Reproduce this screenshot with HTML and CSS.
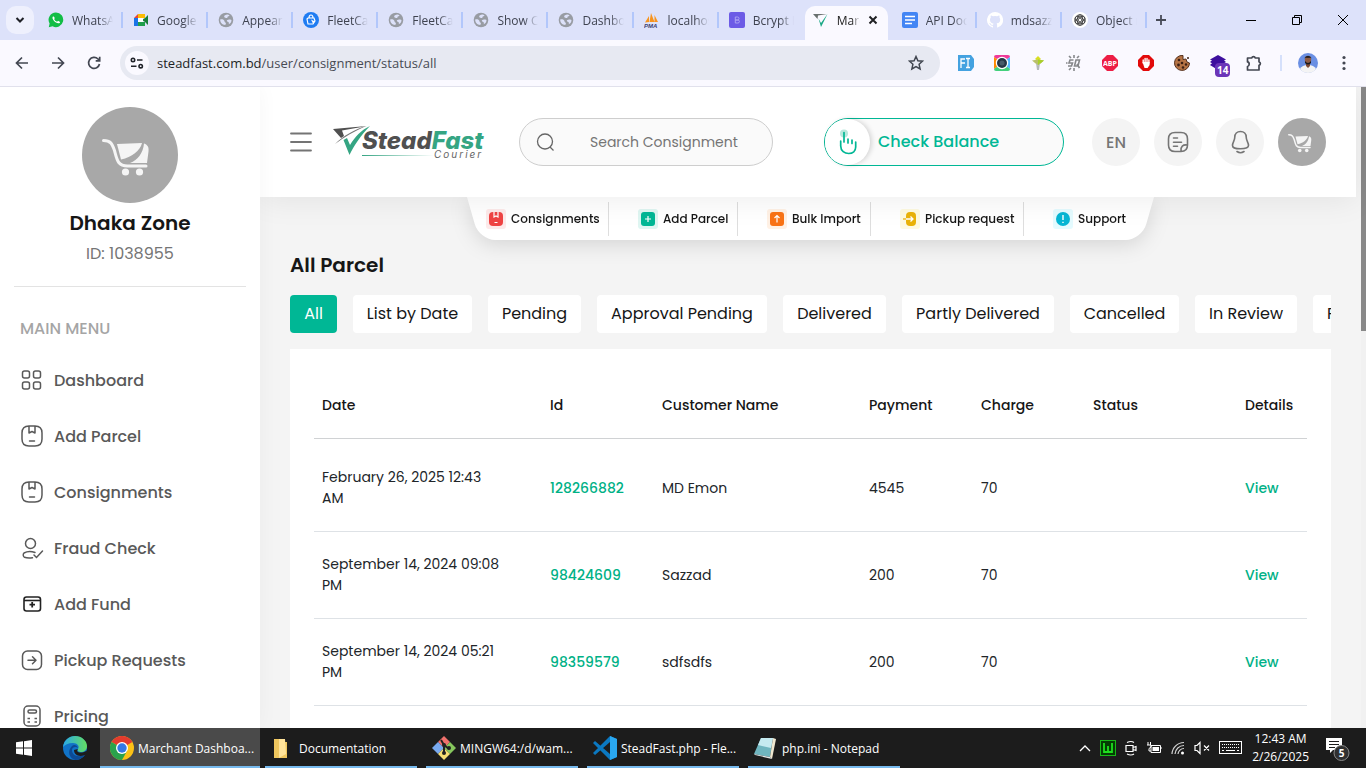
FILE: index.html
```html
<!DOCTYPE html>
<html lang="en">
<head>
<meta charset="utf-8">
<meta name="viewport" content="width=device-width, initial-scale=1">
<title>Marchant Dashboard</title>
<link rel="stylesheet" href="styles.css">
</head>
<body>
<svg class="sprite" aria-hidden="true">
  <symbol id="globe" viewBox="0 0 16 16"><circle cx="8" cy="8" r="7.300" fill="#989ca3"/><path d="M2.200 7.500c2-.6 3.200 0 4 1.100.6 1 .2 1.600 1.200 2 .9.500.5 1.600-.2 2.400-3-.2-5.200-2.600-5-5.500zM7 3.200c1.500-1 3.300-.9 4.500 0-.2 1-1 1-1.700 1.300-.5.600 0 1.300-1 1.500s-1.600-.8-2.500-.8c-.3-1 .1-1.600.7-2zM9 8.200c1.200-1 3-.7 4.500-.3 0 2-1.200 3.600-2.700 4.300.3-1.500-.1-2-1-2.400C9 9.400 8.600 8.800 9 8.200z" fill="#dde2fa"/></symbol>
  <symbol id="cart" viewBox="0 0 96 96"><circle cx="48" cy="48" r="48" fill="#a8a8a8"/><path d="M21.500 33.500c7 0 8.500 3 11 10 2.500 9 3 15.500 13 15.500H64" fill="none" stroke="#f5f5f5" stroke-width="3" stroke-linecap="round"/><path d="M35 37l25-1c-2 8-10 14-21 16.500z" fill="#f5f5f5"/><path d="M62 36.500c4 1.500 5 4 4.500 8L65 56H48c8-3 13-10 14-19.500z" fill="#f5f5f5"/><circle cx="43.500" cy="65" r="3.600" fill="#f5f5f5"/><circle cx="57.500" cy="65" r="3.600" fill="#f5f5f5"/></symbol>
  <symbol id="parcel" viewBox="0 0 24 24"><path d="M2 9q0-7 7-7h6q7 0 7 7v6q0 7-7 7H9q-7 0-7-7zM9 2.500V9l3-1.500L15 9V2.500M9.500 17h5" fill="none" stroke="currentColor" stroke-width="1.500" stroke-linecap="round" stroke-linejoin="round"/></symbol>
</svg>

<div class="window">
  <header class="tabstrip">
    <button class="tab-search" aria-label="Search tabs"><svg width="10" height="8" viewBox="0 0 10 8"><path d="M1.500 2L5 5.500 8.500 2" fill="none" stroke="#1f2127" stroke-width="2"/></svg></button>
    <div class="tabs">
      <button class="tab"><svg class="fav" viewBox="0 0 16 16"><path d="M8 .5A7.300 7.300 0 001.600 11.500L.8 15.300l3.800-1A7.300 7.300 0 108 .5z" fill="#12bd45"/><path d="M5.300 4.200c-.9.500-1.100 1.800-.4 3 1.100 2 3 3.700 5.200 4.100 1 .2 2-.5 2-1.400L10 8.800l-.9 1C7.700 9.300 6.600 8.200 6.100 7l.8-.9z" fill="#fff"/></svg><span>WhatsApp</span></button>
      <button class="tab"><svg class="fav" viewBox="0 0 16 16"><path d="M1 6l4-4v4z" fill="#ea4335"/><path d="M5 2h7v4H5z" fill="#fbbc04"/><path d="M1 6h4v8H1z" fill="#1a73e8"/><path d="M5 10h7v4H5z" fill="#1e9f4b"/><path d="M9 8l3-2 3-3v10l-3-3z" fill="#188038"/><path d="M5 6h5v4H5z" fill="#fff"/></svg><span>Google Meet</span></button>
      <button class="tab"><svg class="fav"><use href="#globe"/></svg><span>Appearance</span></button>
      <button class="tab"><svg class="fav" viewBox="0 0 16 16"><circle cx="8" cy="8" r="8" fill="#1f7cf2"/><path d="M5 6h6l1 3-2 3H5L4 7zM6 6q0-3 2-3t2 3" fill="none" stroke="#fff" stroke-width="1.200"/><path d="M8 7.500l4 2-2 2z" fill="#fff"/></svg><span>FleetCart</span></button>
      <button class="tab"><svg class="fav"><use href="#globe"/></svg><span>FleetCart</span></button>
      <button class="tab"><svg class="fav"><use href="#globe"/></svg><span>Show Cart</span></button>
      <button class="tab"><svg class="fav"><use href="#globe"/></svg><span>Dashboard</span></button>
      <button class="tab"><svg class="fav" viewBox="0 0 16 16"><path d="M1 10.500L5 4v6zM5.500 10L7 1l3.500 9zM10.500 10V3L14 10z" fill="#f7941e"/><text x="0" y="15.500" class="pma">PMA</text></svg><span>localhost</span></button>
      <button class="tab last-before"><svg class="fav" viewBox="0 0 16 16"><rect width="16" height="16" rx="2" fill="#6c5be6"/><path d="M6.300 5h2.200a1.400 1.400 0 010 3H6.300zM6.300 8h2.600a1.500 1.500 0 010 3H6.300z" fill="none" stroke="#b1a8f3" stroke-width=".9"/></svg><span>Bcrypt Hash</span></button>
      <button class="tab tab-active"><svg class="fav" viewBox="0 0 16 16"><path d="M0 2h14L5 3.500 4.500 7z" fill="#69706f"/><path d="M5.500 6.500L8 11l6.500-9L8 15z" fill="#1aa885"/></svg><span>Marchant</span><svg class="tab-close" width="10" height="10" viewBox="0 0 10 10"><path d="M1.500 1.500l7 7M8.500 1.500l-7 7" stroke="#202124" stroke-width="2"/></svg></button>
      <button class="tab"><svg class="fav" viewBox="0 0 16 16"><rect width="16" height="16" rx="2" fill="#4285f4"/><path d="M3 4.500h10M3 8h10M3 11.500h7" stroke="#fff" stroke-width="1.600"/></svg><span>API Docs</span></button>
      <button class="tab"><svg class="fav" viewBox="0 0 16 16"><path fill="#fff" d="M8 0a8 8 0 00-2.500 15.600c.4.100.5-.2.500-.4v-1.500c-2 .5-2.600-.9-2.600-.9-.4-.9-.9-1.200-.9-1.200-.7-.5.100-.5.100-.5.800.1 1.200.9 1.200.9.700 1.200 1.900.9 2.300.7.100-.5.300-.9.500-1.100-1.800-.2-3.600-.9-3.600-4 0-.9.300-1.600.8-2.100-.1-.2-.4-1 .1-2.100 0 0 .7-.2 2.200.8a7.600 7.600 0 014 0c1.500-1 2.200-.8 2.200-.8.400 1.100.2 1.900.1 2.100.5.600.8 1.300.8 2.100 0 3.100-1.900 3.700-3.600 3.900.3.300.5.800.5 1.500v2.200c0 .2.100.5.500.4A8 8 0 008 0z"/></svg><span>mdsazzad</span></button>
      <button class="tab"><svg class="fav" viewBox="0 0 16 16"><circle cx="8" cy="8" r="8" fill="#fff"/><g fill="none" stroke="#333" stroke-width=".8"><circle cx="8" cy="8" r="5.300"/><circle cx="8" cy="8" r="1.800"/><ellipse cx="8" cy="8" rx="2.800" ry="5.200"/><ellipse cx="8" cy="8" rx="2.800" ry="5.200" transform="rotate(60 8 8)"/><ellipse cx="8" cy="8" rx="2.800" ry="5.200" transform="rotate(120 8 8)"/></g></svg><span>Object m</span></button>
    </div>
    <button class="new-tab" aria-label="New tab"><svg width="12" height="12" viewBox="0 0 12 12"><path d="M6 1v10M1 6h10" stroke="#474b57" stroke-width="1.800"/></svg></button>
    <div class="win-buttons">
      <button aria-label="Minimize"><svg width="10" height="10" viewBox="0 0 10 10"><path d="M0 5.500h10" stroke="#000"/></svg></button>
      <button aria-label="Restore"><svg width="10" height="10" viewBox="0 0 10 10"><path d="M.5 2.500h7v7h-7zM2.500 2V.5h7v7H8" fill="none" stroke="#000"/></svg></button>
      <button aria-label="Close"><svg width="10" height="10" viewBox="0 0 10 10"><path d="M0 0l10 10M10 0L0 10" stroke="#000"/></svg></button>
    </div>
  </header>

  <div class="toolbar">
    <div class="nav-buttons">
      <button aria-label="Back"><svg width="14" height="14" viewBox="0 0 14 14"><path d="M13 7H2M7 1.500L1.500 7 7 12.500"/></svg></button>
      <button aria-label="Forward"><svg width="14" height="14" viewBox="0 0 14 14"><path d="M1 7h11M7 1.500L12.500 7 7 12.500"/></svg></button>
      <button aria-label="Reload"><svg width="14" height="14" viewBox="0 0 14 14"><path d="M12.500 8A5.500 5.500 0 1111 3l1.500 1.500M12.700.8v4h-4"/></svg></button>
    </div>
    <div class="omnibox">
      <button class="site-info" aria-label="Site information"><svg width="14" height="12" viewBox="0 0 14 12"><g fill="none" stroke="#202329" stroke-width="1.600"><circle cx="3" cy="3" r="1.700"/><path d="M7 3h5.500M1 9.200h5.500"/><circle cx="10.700" cy="9.200" r="1.700"/></g></svg></button>
      <div class="url" role="textbox" aria-label="Address" contenteditable="true" spellcheck="false">steadfast.com.bd<span>/user/consignment/status/all</span></div>
      <button class="star" aria-label="Bookmark"><svg width="16" height="16" viewBox="0 0 16 16"><path d="M8 1.500l1.900 4.200 4.600.5-3.400 3.100 1 4.600L8 11.500l-4.100 2.400 1-4.600L1.500 6.200l4.600-.5z" fill="none" stroke="#414650" stroke-width="1.500"/></svg></button>
    </div>
    <div class="extensions">
      <button aria-label="Font tool"><svg width="16" height="16" viewBox="0 0 16 16"><path d="M0 0h13l3 4v8l-3 4H0z" fill="#44a2e0"/><path d="M3 13V4h4M3 8h4M8 3.500h4M10 3.500v9M8 12.500h4" fill="none" stroke="#fff" stroke-width="1.300"/></svg></button>
      <button aria-label="Color picker"><svg width="16" height="16" viewBox="0 0 16 16"><path d="M2 0h12q2 0 2 2L8 8 0 2q0-2 2-2z" fill="#ef3b9a"/><path d="M0 2l8 6-8 6z" fill="#ff8a00"/><path d="M16 2L8 8l8 6z" fill="#50b8ff"/><path d="M0 14l8-6 8 6q0 2-2 2H2q-2 0-2-2z" fill="#43d07c"/><circle cx="8" cy="8" r="6.200" fill="#fff"/><circle cx="8" cy="8" r="5" fill="#263746"/><circle cx="8" cy="8" r="2.500" fill="#485b6a"/></svg></button>
      <button aria-label="Pointer"><svg width="12" height="16" viewBox="0 0 12 16"><path d="M6 1l3 3-3 2-3-2z" fill="#d9e021"/><path d="M0 5.500l6-1 6 1-6 5z" fill="#b9c06a"/><path d="M6 4.500l6 1-6 5z" fill="#a9cf2a"/><path d="M4 8l2 2.500L8 8l-1 7H5z" fill="#b4b9bb"/></svg></button>
      <button aria-label="Query tool"><svg width="16" height="16" viewBox="0 0 16 16"><path d="M7.500 5H4L3 8h3.500l-1 3H2M13.500 5H10l-1.500 6H12zM11 9l2.500 4M3 1l2 2M8 0v3M13 1l-2 2M3 15l2-2M8 16v-3M0 8h1.500" fill="none" stroke="#85878a" stroke-width="1.600"/></svg></button>
      <button aria-label="Adblock Plus"><svg width="16" height="16" viewBox="0 0 16 16"><path d="M5 0h6l5 5v6l-5 5H5l-5-5V5z" fill="#ed1e45"/><text x="8" y="11" text-anchor="middle" class="abp">ABP</text></svg></button>
      <button aria-label="AdBlock"><svg width="16" height="16" viewBox="0 0 16 16"><path d="M5 0h6l5 5v6l-5 5H5l-5-5V5z" fill="#e20a0a"/><path d="M5.200 8V5M7.100 7V3.500M9 7V3.500M10.900 8V5" stroke="#fff" stroke-width="1.400" stroke-linecap="round"/><path d="M4.500 7h7.100v3l-2 3H6.500z" fill="#fff"/></svg></button>
      <button aria-label="Cookies"><svg width="16" height="16" viewBox="0 0 16 16"><path d="M9 .5A7.500 7.500 0 1015.500 8L13 7l-1-3-3 .5z" fill="#b47345" stroke="#54301d"/><g fill="#3c2015"><circle cx="5" cy="5" r="1.300"/><circle cx="8" cy="8" r="1.300"/><circle cx="4.500" cy="10" r="1.400"/><circle cx="9" cy="12.500" r="1.300"/><circle cx="12" cy="9.500" r="1.200"/><circle cx="14" cy="3" r="1"/></g></svg></button>
      <button class="ext-badged" aria-label="Stack"><svg width="16" height="16" viewBox="0 0 16 16"><path d="M8 0l8 4.500-2 1 2 1.500-2 1.200L16 10l-8 5-8-5 2-1.800L0 7l2-1.500-2-1z" fill="#3d0f9e"/></svg><span class="ext-badge">14</span></button>
      <button aria-label="Extensions"><svg width="17" height="16" viewBox="0 0 17 16"><path d="M1.500 3h4.200a1.900 1.900 0 013.600 0H13v3.800a1.800 1.800 0 010 3.500V15H1.500v-3.500c2-.2 2.500-4.300 0-4.600z" fill="none" stroke="#434752" stroke-width="1.700" stroke-linejoin="round"/></svg></button>
      <i class="tool-sep"></i>
      <button aria-label="Profile"><svg width="20" height="20" viewBox="0 0 20 20"><circle cx="10" cy="10" r="10" fill="#6a8fe3"/><path d="M2 16q2-4 8-4t8 4a10 10 0 01-16 0z" fill="#f4f4f4"/><path d="M8 9h4v4l-2 2-2-2z" fill="#7d4b36"/><ellipse cx="10" cy="7" rx="3.200" ry="4.200" fill="#8e5b45"/><path d="M6.500 6c-.3-4 7.300-4 7 0L13 4.800H7zM7 8q3 4 6 0v2q-3 3-6 0z" fill="#17191f"/></svg></button>
      <button aria-label="Menu"><svg width="4" height="16" viewBox="0 0 4 16"><g fill="#434752"><circle cx="2" cy="2.500" r="1.600"/><circle cx="2" cy="8" r="1.600"/><circle cx="2" cy="13.500" r="1.600"/></g></svg></button>
    </div>
  </div>

  <div class="page">
    <aside class="sidebar">
      <div class="profile">
        <svg class="avatar" viewBox="0 0 96 96"><use href="#cart"/></svg>
        <h2>Dhaka Zone</h2>
        <p>ID: 1038955</p>
      </div>
      <h3 class="menu-title">MAIN MENU</h3>
      <nav class="menu">
        <a href="#"><svg viewBox="0 0 24 24"><g fill="none" stroke="currentColor" stroke-width="1.500"><rect x="2.500" y="3" width="7" height="7" rx="2"/><rect x="13.500" y="3" width="7" height="7" rx="2"/><rect x="2.500" y="14" width="7" height="7" rx="2"/><rect x="13.500" y="14" width="7" height="7" rx="2"/></g></svg>Dashboard</a>
        <a href="#"><svg><use href="#parcel"/></svg>Add Parcel</a>
        <a href="#"><svg><use href="#parcel"/></svg>Consignments</a>
        <a href="#"><svg viewBox="0 0 24 24"><g fill="none" stroke="currentColor" stroke-width="1.500" stroke-linecap="round"><circle cx="10.500" cy="7.500" r="5"/><path d="M15 16.500c-3-1.200-8-1.300-11 .5-1.200 1-1 3.500.5 4.300 2 .8 6 .8 8 .5M14 19l2.500 2.500 6-6.500"/></g></svg>Fraud Check</a>
        <a href="#"><svg viewBox="0 0 24 24"><g fill="none" stroke="#222" stroke-width="1.600" stroke-linejoin="round"><rect x="4" y="5" width="16.500" height="14" rx="2.500"/><path d="M4 8.500h16.500"/><path d="M12.200 10v5.500M9.500 12.700H15" stroke-width="1.800"/></g></svg>Add Fund</a>
        <a href="#"><svg viewBox="0 0 24 24"><g fill="none" stroke="currentColor" stroke-width="1.500" stroke-linecap="round" stroke-linejoin="round"><rect x="2.500" y="3" width="19" height="18.500" rx="5"/><path d="M8 12.300h8M12.500 8.800L16 12.300l-3.500 3.500"/></g></svg>Pickup Requests</a>
        <a href="#"><svg viewBox="0 0 24 24"><g fill="none" stroke="currentColor" stroke-width="1.500"><rect x="4" y="2" width="16" height="20" rx="4"/><rect x="8" y="6" width="8.500" height="3" rx="1.500"/><path d="M7.500 14.500H10M14.500 14.500H17M7.500 18H10M14.500 18H17"/></g></svg>Pricing</a>
      </nav>
    </aside>

    <main class="content">
      <div class="topbar">
        <button class="burger" aria-label="Toggle menu"><svg width="22" height="20" viewBox="0 0 22 20"><path d="M1 1.500h20M1 10h20M1 18.500h20" stroke="#747474" stroke-width="1.800" stroke-linecap="round"/></svg></button>
        <a class="logo" href="#" aria-label="SteadFast Courier"><svg width="156" height="36" viewBox="0 0 156 36"><defs><linearGradient id="rule"><stop offset="0" stop-color="#35a583"/><stop offset="1" stop-color="#35a583" stop-opacity="0"/></linearGradient></defs><path d="M0 5L34 2 9 6.500 11 12l-3 2z" fill="#505050"/><path d="M2 20C10 12 22 5 33 2 22 7 11 13 2 20z" fill="#777"/><path d="M10.500 16l3.500-2 3 7C22 13 28 6 37 2 27 12 21 22 16.500 31z" fill="#35a583"/><path d="M29 31h72v1H29z" fill="url(#rule)"/><text x="29" y="25" class="logo-name"><tspan fill="#505050">Stead</tspan><tspan fill="#35a583">Fast</tspan></text><text x="101" y="34" class="logo-sub">Courier</text></svg></a>
        <label class="search"><svg width="20" height="20" viewBox="0 0 20 20"><circle cx="9" cy="9.500" r="7.500" fill="none" stroke="#666" stroke-width="1.300"/><path d="M14 15l3.500 3.500" stroke="#666" stroke-width="1.300"/></svg><input type="search" placeholder="Search Consignment" aria-label="Search Consignment"></label>
        <button class="balance"><span class="knob"><svg width="18" height="26" viewBox="0 0 18 26"><circle cx="5" cy="4.500" r="4" fill="#b9e8dd"/><path d="M5 3.500V13M9 10v4M13 11v3.500M16.700 13v5c0 4-3 6.500-7 6.500s-8-2.500-8-7.500V12" fill="none" stroke="#00b795" stroke-width="1.700" stroke-linecap="round"/></svg></span>Check Balance</button>
        <div class="actions">
          <button>EN</button>
          <button aria-label="Notes"><svg width="22" height="22" viewBox="0 0 22 22"><path d="M14 20.500H8q-6.500 0-6.500-6.500V8q0-6.500 6.500-6.500h6q6.500 0 6.500 6.500v6q0 6.500-6.500 6.500zM20 14c-4-.5-6.500 1.500-6 6M6.500 7h4M6.500 11.300h8M6.500 15.300h4" fill="none" stroke="#757575" stroke-width="1.600" stroke-linecap="round"/></svg></button>
          <button aria-label="Notifications"><svg width="20" height="24" viewBox="0 0 20 24"><path d="M10.500 1.500c3.500 0 5.700 2.500 5.700 5.500 0 4 2.300 5 2.300 8.500 0 2.200-1.700 3.200-8 3.200s-8-1-8-3.200c0-3.500 2.300-4.500 2.300-8.500 0-3 2.200-5.500 5.700-5.500zM7 21.500q3.500 2.500 7 0" fill="none" stroke="#757575" stroke-width="1.600" stroke-linecap="round"/></svg></button>
          <button aria-label="Account"><svg width="48" height="48" viewBox="0 0 96 96"><use href="#cart"/></svg></button>
        </div>
      </div>

      <nav class="quick">
        <a href="#"><svg viewBox="0 0 20 20"><rect width="20" height="20" rx="3" fill="#fdeaea"/><rect x="3" y="3" width="14" height="14" rx="4" fill="#ef4444"/><path d="M8 3v5l2-1 2 1V3M8.500 13.500h3" fill="none" stroke="#fff" stroke-width="1.200"/></svg>Consignments</a>
        <a href="#"><svg viewBox="0 0 20 20"><rect width="20" height="20" rx="3" fill="#dff6f2"/><rect x="3" y="3" width="14" height="14" rx="3" fill="#00b795"/><path d="M10 7v6M7 10h6" stroke="#fff" stroke-width="1.200"/></svg>Add Parcel</a>
        <a href="#"><svg viewBox="0 0 20 20"><rect width="20" height="20" rx="3" fill="#fff1e5"/><rect x="3" y="3" width="14" height="14" rx="3" fill="#f97316"/><path d="M10 13.500V7M7.500 9L10 6.500 12.500 9" fill="none" stroke="#fff" stroke-width="1.200"/></svg>Bulk Import</a>
        <a href="#"><svg viewBox="0 0 20 20"><rect width="20" height="20" rx="3" fill="#fefae0"/><path d="M6 7q0-4 4-4h2q4 0 4 4v6q0 4-4 4h-2q-4 0-4-4z" fill="#eab308"/><path d="M6 10h6.500M10.500 7.500L13 10l-2.500 2.500" fill="none" stroke="#fff" stroke-width="1.300"/><path d="M3 10h3" stroke="#eab308" stroke-width="1.300"/></svg>Pickup request</a>
        <a href="#"><svg viewBox="0 0 20 20"><rect width="20" height="20" rx="3" fill="#e4fbff"/><circle cx="10" cy="10" r="7" fill="#06b6d4"/><path d="M10 6v5M10 12.700v1.300" stroke="#fff" stroke-width="1.400"/></svg>Support</a>
      </nav>

      <section class="parcels">
        <h1>All Parcel</h1>
        <div class="filters">
          <button class="selected">All</button><button>List by Date</button><button>Pending</button><button>Approval Pending</button><button>Delivered</button><button>Partly Delivered</button><button>Cancelled</button><button>In Review</button><button>Returned</button>
        </div>
        <div class="card">
          <table>
            <colgroup><col class="c-date"><col class="c-num"><col><col class="c-num"><col class="c-num"><col class="c-status"><col class="c-details"></colgroup>
            <thead><tr><th>Date</th><th>Id</th><th>Customer Name</th><th>Payment</th><th>Charge</th><th>Status</th><th>Details</th></tr></thead>
            <tbody>
              <tr><td>February 26, 2025 12:43 AM</td><td><a href="#">128266882</a></td><td>MD Emon</td><td>4545</td><td>70</td><td></td><td><a href="#">View</a></td></tr>
              <tr><td>September 14, 2024 09:08 PM</td><td><a href="#">98424609</a></td><td>Sazzad</td><td>200</td><td>70</td><td></td><td><a href="#">View</a></td></tr>
              <tr><td>September 14, 2024 05:21 PM</td><td><a href="#">98359579</a></td><td>sdfsdfs</td><td>200</td><td>70</td><td></td><td><a href="#">View</a></td></tr>
            </tbody>
          </table>
        </div>
      </section>
    </main>
    <div class="scrollbar"><div class="thumb"></div></div>
  </div>

  <footer class="taskbar">
    <button class="pinned" aria-label="Start"><svg width="16" height="16" viewBox="0 0 16 16"><path d="M0 2.300L7 1.300V7.500H0zM8 1.200L16 0v7.500H8zM0 8.500h7v6.200l-7-1zM8 8.500h8V16l-8-1.200z" fill="#fff"/></svg></button>
    <button class="pinned" aria-label="Edge"><svg width="24" height="24" viewBox="0 0 24 24"><defs><linearGradient id="eg" x1="0" x2="1"><stop offset="0" stop-color="#2aa9e8"/><stop offset="1" stop-color="#63de62"/></linearGradient></defs><circle cx="12" cy="12" r="12" fill="#1173c7"/><path d="M0 11C1 4 6 0 12 0c7 0 12 5 12 10 0 4-3 6-6 6-2 0-4-1-3-3 2-3-1-6-5-6-5 0-8 2-10 4z" fill="url(#eg)"/><path d="M9 14c0 5 5 8 13 5-3 4-7 5-10 5-6-2-8-9-3-14 2-2 5-1 6 2-2-2-6-1-6 2z" fill="#0c4a94"/><path d="M15 13c-2 2 0 4 4 3.500 3-.5 5-2 5-2s0 3-2 4.500c-6 2.500-11 0-11-5z" fill="#1c1c1c"/></svg></button>
    <div class="apps">
      <button class="app current"><svg width="24" height="24" viewBox="0 0 24 24"><circle cx="12" cy="12" r="12" fill="#fbc116"/><path d="M12 12L1.600 6A12 12 0 0122.400 6z" fill="#e33b2e"/><path d="M1.600 6A12 12 0 0012 24l5-9z" fill="#2aa24c"/><circle cx="12" cy="12" r="6" fill="#fff"/><circle cx="12" cy="12" r="4.700" fill="#3478e5"/></svg><span>Marchant Dashboa...</span></button>
      <button class="app"><svg width="24" height="24" viewBox="0 0 24 24"><path d="M3 3h10v3h3v16H3z" fill="#efc65e"/><path d="M8 3h6l1 15-7 4z" fill="#ffe39a"/></svg><span>Documentation</span></button>
      <button class="app"><svg width="24" height="24" viewBox="0 0 24 24"><path d="M12 0l6 6-6 6-6-6z" fill="#f0716d"/><path d="M6 6l6 6-6 6-6-6z" fill="#79a9ef"/><path d="M18 6l6 6-6 6-6-6z" fill="#86c65d"/><path d="M12 12l6 6-6 6-6-6z" fill="#f7df73"/><path d="M9 4l3 5v9M12 9l5 4" fill="none" stroke="#222" stroke-width="2"/><circle cx="12" cy="9" r="2" fill="#222"/><circle cx="12" cy="17" r="2" fill="#222"/><circle cx="17" cy="12" r="2" fill="#222"/></svg><span>MINGW64:/d/wam...</span></button>
      <button class="app"><svg width="24" height="24" viewBox="0 0 24 24"><path d="M17 0l7 3v18l-7 3L2 9l-2-2 2-2 15 13V6L2 19l-2-2z" fill="#0b78c1"/><path d="M17 0l7 3v18l-7 3z" fill="#2aa8f1"/></svg><span>SteadFast.php - Fle...</span></button>
      <button class="app"><svg width="24" height="24" viewBox="0 0 24 24"><path d="M7 2h12l-3 19-16-3z" fill="#6fb5bf"/><path d="M7 2h12l-2 10L4 9z" fill="#c5eaf0"/><path d="M19 2l3 1-4 20-2-2z" fill="#efe7cf"/><path d="M0 18l16 3 2 2-17-4z" fill="#e4e7e8"/></svg><span>php.ini - Notepad</span></button>
    </div>
    <div class="tray">
      <svg width="12" height="8" viewBox="0 0 12 8"><path d="M1 7l5-5 5 5" fill="none" stroke="#fff" stroke-width="1.300"/></svg>
      <svg width="16" height="16" viewBox="0 0 16 16"><rect x=".5" y=".5" width="15" height="15" fill="#043d04" stroke="#18b918"/><path d="M4 3v9h8V3M8 6v6" fill="none" stroke="#1fdf1f" stroke-width="1.800"/></svg>
      <svg width="12" height="16" viewBox="0 0 12 16"><path d="M1 5.500h7v6H1zM8 7.500l3-1v4l-3-1M2 2.500q4-2 7 0M2 14q4 2 7 0" fill="none" stroke="#fff" stroke-width="1.200"/></svg>
      <svg width="16" height="14" viewBox="0 0 16 14"><path d="M5 4.500h9.500v7H5zM14.500 7H16M2 1v3M4.500 1v3M1 4h4v2l-2 1.500V10h2" fill="none" stroke="#fff"/><path d="M6.500 6h6.500v4H6.500z" fill="#fff"/></svg>
      <svg width="14" height="14" viewBox="0 0 14 14"><path d="M1 13A12 12 0 0113 1.500M4 13A9 9 0 0113 4.500M7 13A6 6 0 0113 7.500" fill="none" stroke="#d4d4d4" stroke-width="1.200"/><circle cx="11.500" cy="12" r="1.500" fill="#fff"/></svg>
      <svg width="16" height="14" viewBox="0 0 16 14"><path d="M1 4.500h2L6 1.500v11L3 9.500H1zM10 4.500l5 5M15 4.500l-5 5" fill="none" stroke="#fff" stroke-width="1.200"/></svg>
      <svg width="24" height="14" viewBox="0 0 24 14"><rect x=".5" y=".5" width="22" height="12" fill="none" stroke="#fff"/><path d="M3 3.500h17M3 6.500h17" stroke="#fff" stroke-width="1" stroke-dasharray="1 1"/><path d="M3 9.500h2M7 9.500h9M18 9.500h2" stroke="#fff"/></svg>
      <div class="clock"><span>12:43 AM</span><span>2/26/2025</span></div>
      <svg class="notice" width="26" height="26" viewBox="0 0 26 26"><path d="M1 3h16v12H8l-3 3v-3H1z" fill="#fff"/><path d="M4 6.500h10M4 9.500h10M4 12.500h6" stroke="#1c1c1c"/><circle cx="16.500" cy="18" r="7.500" fill="#303030" stroke="#8a8a8a"/><text x="16.500" y="22" text-anchor="middle" class="notice-count">5</text></svg>
    </div>
  </footer>
</div>
</body>
</html>
```

FILE: styles.css
```css
* { box-sizing: border-box; }
body { margin: 0; font-family: Poppins, Inter, sans-serif; color: #212529; }
button { border: 0; padding: 0; background: none; font: inherit; color: inherit; cursor: pointer; }
a { color: inherit; text-decoration: none; }
h1, h2, h3, p { margin: 0; }
svg { flex: none; display: block; }
.sprite { position: absolute; width: 0; height: 0; }

.window { height: 100vh; display: flex; flex-direction: column; overflow: hidden; }

/* Browser tab strip */
.tabstrip { flex: none; display: flex; align-items: center; height: 40px; background: #dde2fa; font: 12px "Open Sans", sans-serif; color: #3f4350; }
.tab-search { width: 28px; height: 28px; margin: 0 4px 0 6px; border-radius: 10px; background: #eef0fd; display: grid; place-items: center; }
.tabs { flex: 0 1 1109px; display: flex; align-self: stretch; min-width: 0; }
.tab { position: relative; flex: 1 1 0; min-width: 0; display: flex; align-items: center; gap: 8px; padding: 0 10px; }
.tab span { flex: 1; min-width: 0; overflow: hidden; white-space: nowrap; text-align: left; -webkit-mask-image: linear-gradient(90deg, #000 65%, transparent); mask-image: linear-gradient(90deg, #000 65%, transparent); }
.tab::after { content: ""; position: absolute; right: 0; top: 12px; width: 2px; height: 16px; background: #b2c7fb; }
.last-before::after, .tab-active::after { display: none; }
.fav { width: 16px; height: 16px; }
.pma { font: italic bold 6px "Liberation Sans", sans-serif; fill: #3b3f70; }
.tab-active { margin: 6px 4px 0 1px; padding: 0 10px 6px 8px; border-radius: 10px 10px 0 0; background: #faf9ff; color: #222; }
.new-tab { width: 28px; height: 28px; display: grid; place-items: center; }
.win-buttons { margin-left: auto; display: flex; align-self: stretch; }
.win-buttons button { width: 46px; display: grid; place-items: center; }

/* Browser toolbar */
.toolbar { flex: none; display: flex; align-items: center; height: 47px; background: #faf9ff; border-bottom: 1px solid #e1e1ec; font-family: "Open Sans", sans-serif; }
.nav-buttons { display: flex; width: 120px; padding-left: 4px; }
.nav-buttons button { width: 36px; height: 34px; display: grid; place-items: center; }
.nav-buttons path { fill: none; stroke: #434752; stroke-width: 1.700; }
.omnibox { flex: 1; display: flex; align-items: center; height: 34px; padding: 0 16px 0 5px; border-radius: 17px; background: #e7e9f2; }
.site-info { width: 24px; height: 24px; border-radius: 50%; background: #faf9ff; display: grid; place-items: center; }
.url { flex: 1; padding-left: 8px; font-size: 13px; color: #1d1f25; outline: 0; }
.url span { color: #474b54; }
.extensions { display: flex; align-items: center; padding: 0 4px 0 8px; }
.extensions button { width: 36px; display: grid; place-items: center; }
.abp { font: bold 7px "Open Sans", sans-serif; fill: #fff; }
.ext-badged { position: relative; }
.ext-badge { position: absolute; left: 15px; top: 8px; padding: 0 2px; border-radius: 4px; background: #6a35b8; color: #fff; font-size: 10px; line-height: 14px; font-weight: 700; }
.tool-sep { width: 2px; height: 16px; margin: 0 8px; background: #d5e0fb; }

/* Page */
.page { flex: 1; min-height: 0; display: flex; background: #f4f4f4; overflow: hidden; }
.sidebar { flex: none; width: 260px; background: #fff; padding: 20px 14px 0; z-index: 3; box-shadow: 0 0 20px rgba(0, 0, 0, .04); }
.profile { display: flex; flex-direction: column; align-items: center; padding-bottom: 20px; border-bottom: 1px solid #e3e3e3; }
.avatar { width: 96px; height: 96px; }
.profile h2 { font-size: 20px; line-height: 30px; margin-top: 5px; font-weight: 600; color: #161616; }
.profile p { font-size: 16px; line-height: 24px; margin-top: 4px; color: #757575; }
.menu-title { margin: 30px 6px 11px; font-size: 16px; line-height: 24px; font-weight: 500; color: #a5a5a5; }
.menu a { display: flex; align-items: center; gap: 10px; height: 56px; padding-left: 6px; font-size: 16px; font-weight: 500; color: #595959; }
.menu svg { width: 24px; height: 24px; }
.content { flex: 1; min-width: 0; display: flex; flex-direction: column; }

.topbar { position: relative; z-index: 2; display: flex; align-items: center; height: 110px; flex: none; padding: 0 30px; margin-right: 5px; background: #fff; box-shadow: 0 2px 30px rgba(0, 0, 0, .08); }
.logo { margin-left: 21px; }
.logo-name { font: italic 800 24px Inter, sans-serif; }
.logo-sub { font: italic 10px Inter, sans-serif; fill: #666; letter-spacing: 2px; }
.search { flex: 0 1 254px; min-width: 0; height: 48px; margin-left: 30px; padding: 0 16px; display: flex; align-items: center; gap: 34px; border: 1px solid #cecece; border-radius: 24px; background: #fafafa; }
.search input { flex: 1; min-width: 0; border: 0; padding: 0; outline: 0; background: none; font: 14px Poppins, Inter, sans-serif; }
.search input::placeholder { color: #757575; opacity: 1; }
.balance { flex: 0 1 240px; height: 48px; margin: 0 28px 0 auto; display: flex; align-items: center; gap: 8px; border: 1px solid #00b795; border-radius: 24px; background: #fafafa; font-size: 16px; line-height: 22px; font-weight: 500; color: #00b795; white-space: nowrap; }
.knob { width: 45px; height: 46px; border-radius: 23px; background: #fff; display: grid; place-items: center; box-shadow: 2px 0 5px rgba(0, 0, 0, .15); }
.actions { display: flex; gap: 14px; }
.actions button { width: 48px; height: 48px; border-radius: 50%; background: #f4f4f4; display: grid; place-items: center; font-size: 16px; font-weight: 500; color: #757575; }

.quick { position: relative; z-index: 1; flex: none; align-self: center; display: grid; grid-template-columns: 142px 129px 133px 153px 130px; height: 43px; filter: drop-shadow(0 5px 10px rgba(0, 0, 0, .12)); }
.quick::before, .quick::after { content: ""; position: absolute; z-index: -1; top: 0; bottom: 0; width: 51%; background: #fff; }
.quick::before { left: 0; transform-origin: top left; transform: skewX(16deg); border-radius: 0 0 0 16px; }
.quick::after { right: 0; transform-origin: top right; transform: skewX(-16deg); border-radius: 0 0 16px; }
.quick a { display: flex; align-items: center; gap: 5px; height: 34px; margin-top: 5px; padding-left: 29px; border-right: 1px solid #dedede; font-size: 12px; font-weight: 500; color: #161616; white-space: nowrap; }
.quick a:first-child { padding-left: 19px; }
.quick a:last-child { border: 0; }
.quick svg { width: 20px; height: 20px; }

.parcels { flex: 1; display: flex; flex-direction: column; padding: 10px 30px 0; }
.parcels h1 { font-size: 20px; line-height: 30px; font-weight: 600; color: #161616; }
.filters { display: grid; grid-template-columns: 47px 119px 93px 170px 103px 152px 109px 102px 120px; gap: 16px; margin: 15px 0 16px; overflow: hidden; }
.filters button { height: 38px; padding-bottom: 2px; border-radius: 4px; background: #fff; font-size: 16px; white-space: nowrap; color: #161616; }
.filters button:last-child { padding-left: 14px; text-align: left; }
.filters .selected { background: #00b795; color: #fff; }
.card { flex: 1; padding: 24px 24px 0; background: #fff; }
table { width: 100%; table-layout: fixed; border-collapse: separate; border-spacing: 0; font-size: 14px; line-height: 21px; }
.c-date { width: 228px; }
.c-num { width: 112px; }
.c-status { width: 152px; }
.c-details { width: 70px; }
th { height: 66px; padding: 0 8px; text-align: left; font-weight: 500; color: #161616; border-bottom: 1px solid #d0d2d4; white-space: nowrap; }
td { height: 87px; padding: 0 8px; border-bottom: 1px solid #dee2e6; }
td:first-child { padding-right: 40px; }
tbody tr:first-child td { height: 93px; padding-top: 6px; }
td a { color: #00b186; font-weight: 500; }
.scrollbar { flex: none; width: 5px; background: #f1f1f1; }
.thumb { height: 38%; background: #888; }

/* Taskbar */
.taskbar { flex: none; display: flex; height: 40px; background: #1c1c1c; color: #fff; font: 12px "Open Sans", sans-serif; }
.pinned { width: 50px; display: grid; place-items: center; }
.pinned:first-child { width: 48px; margin-right: 2px; }
.apps { flex: 0 1 804px; display: flex; gap: 1px; min-width: 0; }
.app { position: relative; flex: 1 1 0; min-width: 0; display: flex; align-items: center; gap: 4px; padding: 0 6px 0 10px; }
.app span { white-space: nowrap; }
.app::after { content: ""; position: absolute; left: 4px; right: 4px; bottom: 0; height: 2px; background: #76b9ed; }
.current { background: #4a4a4a; }
.current::after { left: 0; right: 0; }
.tray { margin-left: auto; display: flex; align-items: center; gap: 9px; padding-right: 15px; }
.clock { display: flex; flex-direction: column; align-items: center; line-height: 18px; }
.notice { margin-left: 7px; }
.notice-count { font: bold 10px "Open Sans", sans-serif; fill: #fff; }
```
